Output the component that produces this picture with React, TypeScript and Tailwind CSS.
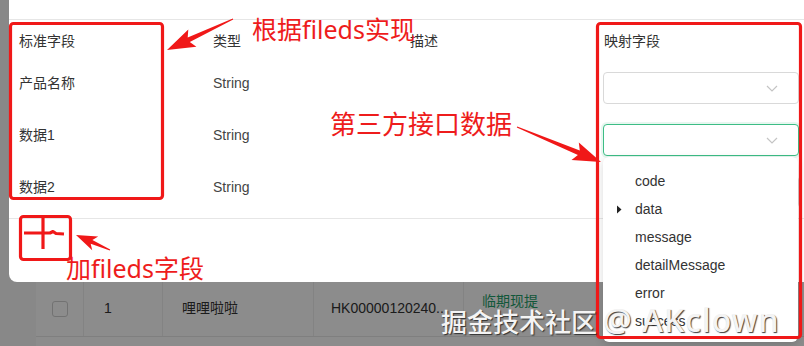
const arrow = (x1: number, y1: number, x2: number, y2: number, hl: number, hw: number, sw: number) => {
  const len = Math.hypot(x2 - x1, y2 - y1);
  const dx = (x2 - x1) / len;
  const dy = (y2 - y1) / len;
  const nx = -dy;
  const ny = dx;
  const bx = x2 - dx * hl;
  const by = y2 - dy * hl;
  const bbx = bx - dx * 4;
  const bby = by - dy * 4;
  const p = [
    [x1 + nx * 0.5, y1 + ny * 0.5],
    [bx + (nx * sw) / 2, by + (ny * sw) / 2],
    [bbx + (nx * hw) / 2, bby + (ny * hw) / 2],
    [x2, y2],
    [bbx - (nx * hw) / 2, bby - (ny * hw) / 2],
    [bx - (nx * sw) / 2, by - (ny * sw) / 2],
    [x1 - nx * 0.5, y1 - ny * 0.5],
  ];
  return p.map((q) => q.map((v) => v.toFixed(1)).join(",")).join(" ");
};

const rows = [
  { name: "产品名称", type: "String" },
  { name: "数据1", type: "String" },
  { name: "数据2", type: "String" },
];

const options = ["code", "data", "message", "detailMessage", "error", "success"];

function Chevron() {
  return (
    <svg width="12" height="7" viewBox="0 0 12 7" fill="none">
      <path d="M1 1l5 5 5-5" stroke="#c4c4c4" strokeWidth="1.2" />
    </svg>
  );
}

function Select({ focused }: { focused?: boolean }) {
  return (
    <div
      className={
        focused
          ? "w-[196px] h-[32px] rounded border border-[#3dbd86] shadow-[0_0_0_2px_rgba(61,189,134,0.12)] bg-white flex items-center justify-end pr-[20px]"
          : "w-[196px] h-[32px] rounded border border-[#d9d9d9] bg-white flex items-center justify-end pr-[20px]"
      }
    >
      <Chevron />
    </div>
  );
}

export default function App() {
  return (
    <div className="relative w-[804px] h-[346px] overflow-hidden bg-[#f7f7f7] font-['Liberation_Sans','Noto_Sans_CJK_SC',sans-serif] text-[14px] text-[#333]">
      {/* page behind the modal */}
      <div className="pl-[36px] pt-[225px]">
        <div className="bg-white">
          <div className="h-[56px] border-b border-[#e8e8e8]" />
          <div className="flex h-[56px] items-center border-b border-[#e8e8e8]">
            <div className="w-[48px] h-full flex items-center justify-center border-r border-[#eeeeee]">
              <div className="w-[16px] h-[16px] rounded-[3px] border border-[#d0d0d0] bg-white" />
            </div>
            <div className="w-[79px] h-full flex items-center pl-[20px] border-r border-[#eeeeee]">1</div>
            <div className="w-[151px] h-full flex items-center pl-[19px] border-r border-[#eeeeee]">哩哩啦啦</div>
            <div className="w-[150px] h-full flex items-center pl-[17px] border-r border-[#eeeeee]">HK00000120240...</div>
            <div className="flex-1 h-full flex items-start pt-[10px] pl-[18px] text-[#1fa06a]">临期现提</div>
          </div>
          <div className="h-[56px]" />
        </div>
      </div>

      <div className="absolute inset-0 bg-black/45" />

      {/* modal */}
      <div className="absolute left-[9px] top-[-20px] w-[820px] h-[302px] rounded-lg bg-white flex flex-col">
        <div className="h-[40px] border-b border-[#e6e6e6] shrink-0" />
        <div className="grid grid-cols-[194px_197px_194px_1fr] h-[42px] items-center px-[10px] text-[#333]">
          <div>标准字段</div>
          <div>类型</div>
          <div>描述</div>
          <div>映射字段</div>
        </div>
        {rows.map((r, i) => (
          <div key={r.name} className="grid grid-cols-[194px_197px_194px_1fr] h-[52px] items-center px-[10px]">
            <div className="pb-[10px]">{r.name}</div>
            <div className="pb-[10px] text-[#444]">{r.type}</div>
            <div />
            <div className="-ml-[1px]">
              <Select focused={i === 1} />
            </div>
          </div>
        ))}
        <div className="border-t border-[#e6e6e6] flex-1" />
      </div>

      {/* dropdown */}
      <div className="absolute left-[603px] top-[157px] w-[195px] h-[185px] rounded-md bg-white shadow-[0_3px_10px_rgba(0,0,0,0.15)] pt-[10px]">
        {options.map((o) => (
          <div key={o} className="h-[28px] flex items-center text-[#333]">
            <div className="w-[32px] flex justify-center">
              {o === "data" && (
                <svg width="6" height="9" viewBox="0 0 6 9">
                  <path d="M1 0.5l4.5 4-4.5 4z" fill="#222" />
                </svg>
              )}
            </div>
            <span>{o}</span>
          </div>
        ))}
      </div>

      {/* annotations */}
      <svg className="absolute inset-0 pointer-events-none" width="804" height="346" viewBox="0 0 804 346">
        <g fill="none" stroke="#f01818" strokeWidth="3.2" strokeLinejoin="round">
          <rect x="10.5" y="23.5" width="152" height="175" rx="3" />
          <rect x="597.5" y="23.5" width="203" height="314" rx="3" />
          <rect x="20.5" y="216.5" width="50" height="43" rx="3" />
          <path d="M24 233 L50 233 L53 231.5 L56 233.5 L64 234" />
          <path d="M43 217 L43 249" />
        </g>
        <g fill="#f01818">
          <polygon points={arrow(233, 19, 167, 50, 24, 19, 5)} />
          <polygon points={arrow(517, 127, 601, 162, 24, 19, 5)} />
          <polygon points={arrow(110, 250, 76, 235, 17, 15, 4)} />
        </g>
      </svg>

      <div className="absolute left-[252px] top-[14px] text-[25px] leading-[30px] text-[#ee1c1c] font-['Noto_Sans','Noto_Sans_CJK_SC',sans-serif]">
        根据fileds实现
      </div>
      <div className="absolute left-[330px] top-[108px] text-[26px] leading-[30px] text-[#ee1c1c] font-['Noto_Sans_CJK_SC',sans-serif]">
        第三方接口数据
      </div>
      <div className="absolute left-[66px] top-[253px] text-[25px] leading-[30px] text-[#ee1c1c] font-['Noto_Sans','Noto_Sans_CJK_SC',sans-serif]">
        加fileds字段
      </div>

      {/* watermark */}
      <div className="absolute left-[441px] top-[302px] flex items-baseline text-[#f4f4f4] font-medium font-['Noto_Sans','Noto_Sans_CJK_SC',sans-serif] [text-shadow:1px_1px_1px_rgba(40,40,40,0.9)] whitespace-nowrap leading-[36px]">
        <span className="text-[26px]">掘金技术社区</span>
        <span className="text-[32px] tracking-[1px] ml-[6px]">@ AKclown</span>
      </div>
    </div>
  );
}
